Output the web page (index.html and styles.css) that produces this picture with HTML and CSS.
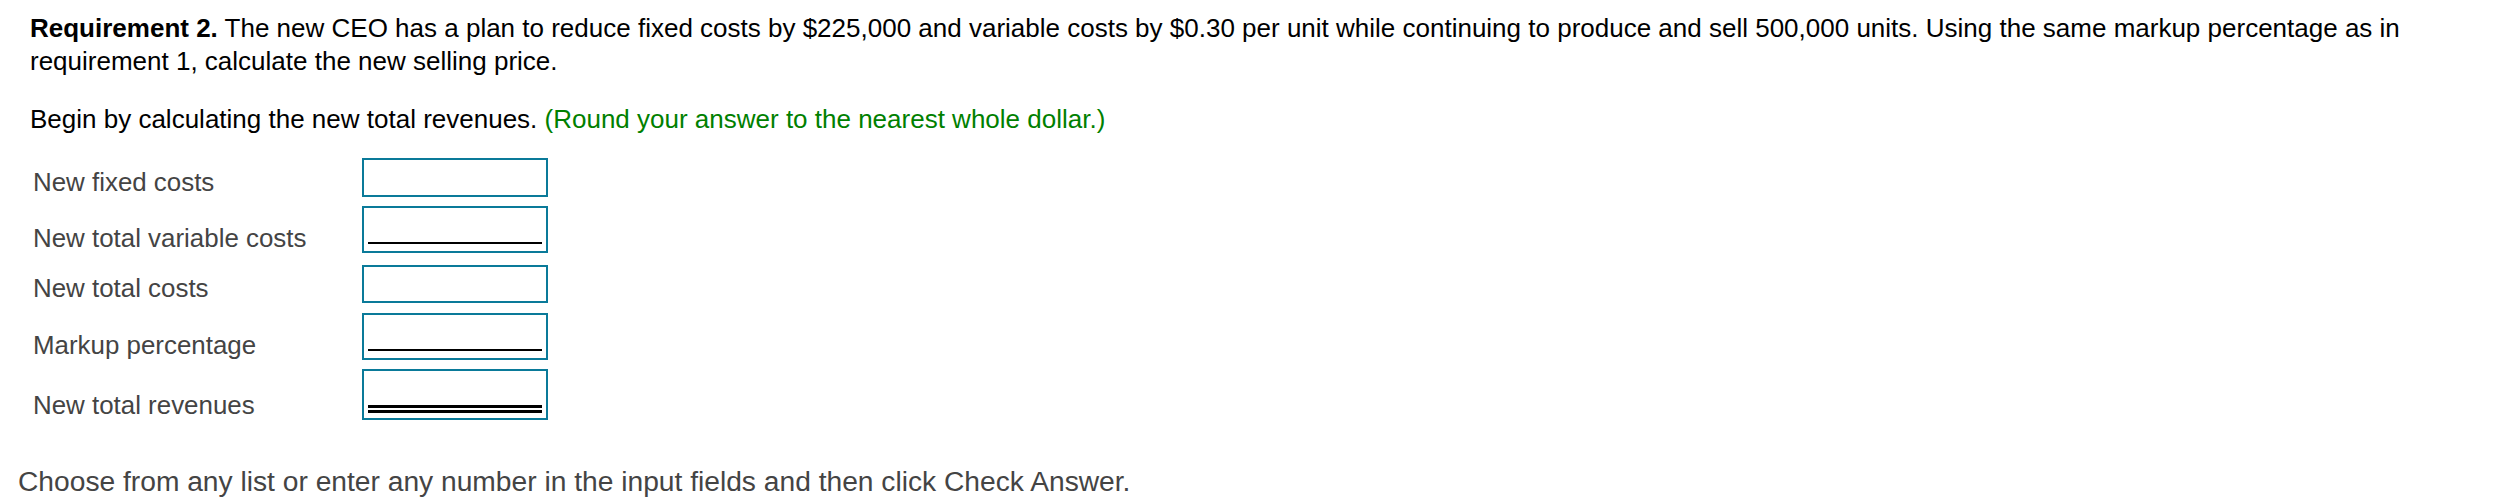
FILE: index.html
```html
<!DOCTYPE html>
<html lang="en">
<head>
<meta charset="utf-8">
<title>Requirement 2</title>
<link rel="stylesheet" href="styles.css">
</head>
<body>
<div class="question">
  <p class="req"><b>Requirement 2.</b> The new CEO has a plan to reduce fixed costs by $225,000 and variable costs by $0.30 per unit while continuing to produce and sell 500,000 units. Using the same markup percentage as in requirement 1, calculate the new selling price.</p>
  <p class="intro">Begin by calculating the new total revenues. <span class="hint">(Round your answer to the nearest whole dollar.)</span></p>
  <div class="grid">
    <div class="row r1">
      <div class="label">New fixed costs</div>
      <div class="box"></div>
    </div>
    <div class="row r2">
      <div class="label">New total variable costs</div>
      <div class="box"><div class="rule"></div></div>
    </div>
    <div class="row r3">
      <div class="label">New total costs</div>
      <div class="box"></div>
    </div>
    <div class="row r4">
      <div class="label">Markup percentage</div>
      <div class="box"><div class="rule"></div></div>
    </div>
    <div class="row r5">
      <div class="label">New total revenues</div>
      <div class="box"><div class="rule double"></div></div>
    </div>
  </div>
</div>
<p class="footer">Choose from any list or enter any number in the input fields and then click Check Answer.</p>
</body>
</html>
```
FILE: styles.css
```css
html, body {
  margin: 0;
  padding: 0;
  background: #ffffff;
}
body {
  font-family: "Liberation Sans", Arial, sans-serif;
  color: #000;
}
.question {
  padding: 12px 16px 0 30px;
}
.req, .intro {
  margin: 0;
  font-size: 26px;
  line-height: 33px;
}
.intro {
  margin-top: 25px;
}
.hint {
  color: #008000;
}
.grid {
  display: flex;
  flex-direction: column;
  margin-top: 22px;
  padding-left: 3px;
}
.row {
  display: flex;
  align-items: flex-end;
}
.r2 { margin-top: 9px; }
.r3 { margin-top: 12px; }
.r4 { margin-top: 10px; }
.r5 { margin-top: 9px; }
.label {
  width: 329px;
  font-size: 25.9px;
  line-height: 28px;
  padding-bottom: 1px;
  color: #444444;
}
.box {
  box-sizing: border-box;
  width: 186px;
  border: 2px solid #0a7a99;
  display: flex;
  flex-direction: column;
  justify-content: flex-end;
  padding: 0 4px;
}
.r1 .box { height: 39px; }
.r2 .box { height: 47px; }
.r3 .box { height: 38px; }
.r4 .box { height: 47px; }
.r5 .box { height: 51px; }
.rule {
  border-bottom: 2px solid #000;
  margin-bottom: 7px;
}
.rule.double {
  height: 2px;
  border-top: 3px solid #000;
  border-bottom: 3px solid #000;
  margin-bottom: 5px;
}
.footer {
  margin: 45px 0 0 18px;
  font-size: 28.2px;
  line-height: 32px;
  color: #444444;
}
```
